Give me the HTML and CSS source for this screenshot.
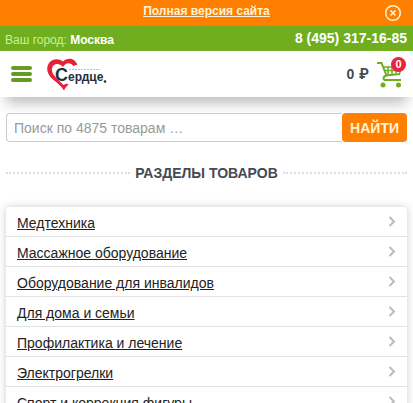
FILE: index.html
```html
<!DOCTYPE html>
<html lang="ru">
<head>
<meta charset="utf-8">
<meta name="viewport" content="width=device-width, initial-scale=1">
<title>Сердце</title>
<link rel="stylesheet" href="styles.css">
</head>
<body>
<div class="full-version">
  <a href="#">Полная версия сайта</a>
  <button class="close" type="button" aria-label="Закрыть">
    <svg width="18" height="18" viewBox="0 0 18 18"><circle cx="9" cy="9" r="7.3"/><path d="M6.500 6.500l5 5M11.500 6.500l-5 5"/></svg>
  </button>
</div>
<div class="contacts">
  <div class="city">Ваш город: <a href="#">Москва</a></div>
  <a class="phone" href="tel:+74953171685">8 (495) 317-16-85</a>
</div>
<header class="header">
  <button class="menu" type="button" aria-label="Меню"><span></span><span></span><span></span></button>
  <a class="logo" href="#">
    <svg width="62" height="34" viewBox="0 0 62 34">
      <path class="heart" d="M16 3.500C12 0 5 .5 2 5C-1 9.500 0 15 3.500 19C7 23 13 26 17 32.500C18 30 19.500 28.500 21.500 26.500L19.500 25.500C18.500 26 17.500 26.500 16.500 27C13 23 9 20.500 6.500 16.500C4 12.500 4.500 8 8 6.500C11 5.300 14 7 16 9C18 5 23 3.500 26.500 8L30.500 6.500C27-.8 20-.5 16 3.500Z"/>
      <path class="tagline" d="M22 11.500H53"/>
      <text x="8" y="23"><tspan class="cap">С</tspan><tspan class="word">ердце</tspan></text>
      <circle cx="58" cy="23.500" r="1.300"/>
    </svg>
  </a>
  <a class="cart" href="#">
    <span class="sum">0 <span class="rub">₽</span></span>
    <svg width="26" height="27" viewBox="0 0 26 27">
      <path class="frame" d="M0 2H4.500L9.500 14.500L23 13M9.500 14.500C5.500 15.500 6 19 8.500 19H24"/>
      <path class="grid" d="M6 6H24L22.500 13M7.500 9.500H23M11 6V14M15 6V14M19 6V13"/>
      <circle cx="6" cy="24" r="2.500"/><circle cx="21.500" cy="24" r="2.500"/>
    </svg>
    <span class="count">0</span>
  </a>
</header>
<main class="content">
  <form class="search">
    <input type="search" aria-label="Поиск по товарам" placeholder="Поиск по 4875 товарам …">
    <button type="submit">НАЙТИ</button>
  </form>
  <h1 class="title">РАЗДЕЛЫ ТОВАРОВ</h1>
  <nav class="sections">
    <a href="#"><span>Медтехника</span><svg width="8" height="11" viewBox="0 0 8 11"><path d="M1.500 1L6 5.500L1.500 10"/></svg></a>
    <a href="#"><span>Массажное оборудование</span><svg width="8" height="11" viewBox="0 0 8 11"><path d="M1.500 1L6 5.500L1.500 10"/></svg></a>
    <a href="#"><span>Оборудование для инвалидов</span><svg width="8" height="11" viewBox="0 0 8 11"><path d="M1.500 1L6 5.500L1.500 10"/></svg></a>
    <a href="#"><span>Для дома и семьи</span><svg width="8" height="11" viewBox="0 0 8 11"><path d="M1.500 1L6 5.500L1.500 10"/></svg></a>
    <a href="#"><span>Профилактика и лечение</span><svg width="8" height="11" viewBox="0 0 8 11"><path d="M1.500 1L6 5.500L1.500 10"/></svg></a>
    <a href="#"><span>Электрогрелки</span><svg width="8" height="11" viewBox="0 0 8 11"><path d="M1.500 1L6 5.500L1.500 10"/></svg></a>
    <a href="#"><span>Спорт и коррекция фигуры</span><svg width="8" height="11" viewBox="0 0 8 11"><path d="M1.500 1L6 5.500L1.500 10"/></svg></a>
  </nav>
</main>
</body>
</html>
```
FILE: styles.css
```css
* {
  box-sizing: border-box;
}

html {
  scrollbar-width: none;
}

body {
  margin: 0;
  background: #fff;
  color: #333;
  font-family: "Liberation Sans", Arial, sans-serif;
  font-size: 14px;
}

button {
  padding: 0;
  border: 0;
  background: none;
  font-family: inherit;
  cursor: pointer;
}

svg {
  display: block;
  flex: none;
}

.full-version {
  display: grid;
  grid-template-columns: 1fr auto 1fr;
  align-items: center;
  height: 26px;
  padding: 0 11px;
  background: #ff8000;
  font-size: 12px;
  font-weight: bold;
  line-height: 14px;
}

.full-version a {
  grid-column: 2;
  padding-bottom: 4px;
  color: #fff3d6;
}

.close {
  justify-self: end;
}

.close svg {
  fill: none;
  stroke: #fff3d6;
  stroke-width: 1.5;
}

.contacts {
  display: flex;
  align-items: center;
  justify-content: space-between;
  height: 25px;
  padding: 0 6px 2px 5px;
  background: #70ae20;
}

.city {
  padding-top: 4px;
  color: #c9f58c;
  font-size: 12px;
}

.city a {
  color: #fff;
  font-weight: bold;
  text-decoration: none;
}

.phone {
  color: #fff;
  font-size: 14px;
  font-weight: bold;
  text-decoration: none;
}

.header {
  display: flex;
  align-items: center;
  height: 46px;
  padding: 0 10px 0 11px;
  background: #fff;
  box-shadow: 0 12px 14px -6px #bbb;
}

.menu {
  display: grid;
  gap: 2px;
  width: 21px;
}

.menu span {
  height: 4px;
  border-radius: 2px;
  background: #679b27;
}

.logo {
  margin: 2px 0 0 15px;
}

.heart {
  fill: #e52239;
}

.tagline {
  stroke: #f2a5ae;
  stroke-dasharray: 2 1;
}

.logo text,
.logo circle {
  fill: #22303a;
}

.logo text {
  font-weight: bold;
}

.cap {
  font-size: 18px;
}

.word {
  font-size: 12px;
}

.cart {
  position: relative;
  display: flex;
  align-items: center;
  gap: 8px;
  margin-left: auto;
  color: #454a52;
  text-decoration: none;
}

.sum {
  font-size: 14px;
  font-weight: bold;
}

.rub {
  margin-left: 1px;
  font-family: Roboto, sans-serif;
}

.cart svg {
  fill: #70ae20;
}

.frame,
.grid {
  fill: none;
  stroke: #70ae20;
  stroke-width: 2;
}

.grid {
  stroke-width: 1.5;
}

.count {
  position: absolute;
  top: -4px;
  right: -3px;
  width: 15px;
  height: 15px;
  border-radius: 50%;
  background: #ea2340;
  color: #fff;
  font-size: 11px;
  font-weight: bold;
  line-height: 15px;
  text-align: center;
}

.content {
  padding: 16px 6px 0;
}

.search {
  display: flex;
  height: 29px;
}

.search input {
  flex: 1;
  min-width: 0;
  padding: 0 7px;
  border: 1px solid #ccc;
  border-right: 0;
  border-radius: 4px 0 0 4px;
  background: #fff;
  color: #333;
  font: 14px "Liberation Sans", Arial, sans-serif;
  appearance: none;
}

.search input::placeholder {
  color: #999;
}

.search button {
  padding: 0 8px;
  border-radius: 4px;
  background: #ff8000;
  color: #fff3d6;
  font-size: 14px;
  font-weight: bold;
}

.title {
  display: flex;
  align-items: center;
  gap: 5px;
  margin: 22px 0 25px;
  color: #454a52;
  font-size: 14px;
  line-height: 18px;
}

.title::before,
.title::after {
  content: "";
  flex: 1;
  border-top: 2px dotted #ddd;
}

.sections {
  border-radius: 4px;
  background: #fff;
  box-shadow: 0 0 8px #ccc;
}

.sections a {
  display: flex;
  align-items: center;
  justify-content: space-between;
  height: 30px;
  padding: 0 11px;
  border-bottom: 1px solid #e3e3e3;
  color: #222;
}

.sections span {
  padding-top: 3px;
}

.sections svg {
  fill: none;
  stroke: #bbb;
  stroke-width: 2;
}
```
